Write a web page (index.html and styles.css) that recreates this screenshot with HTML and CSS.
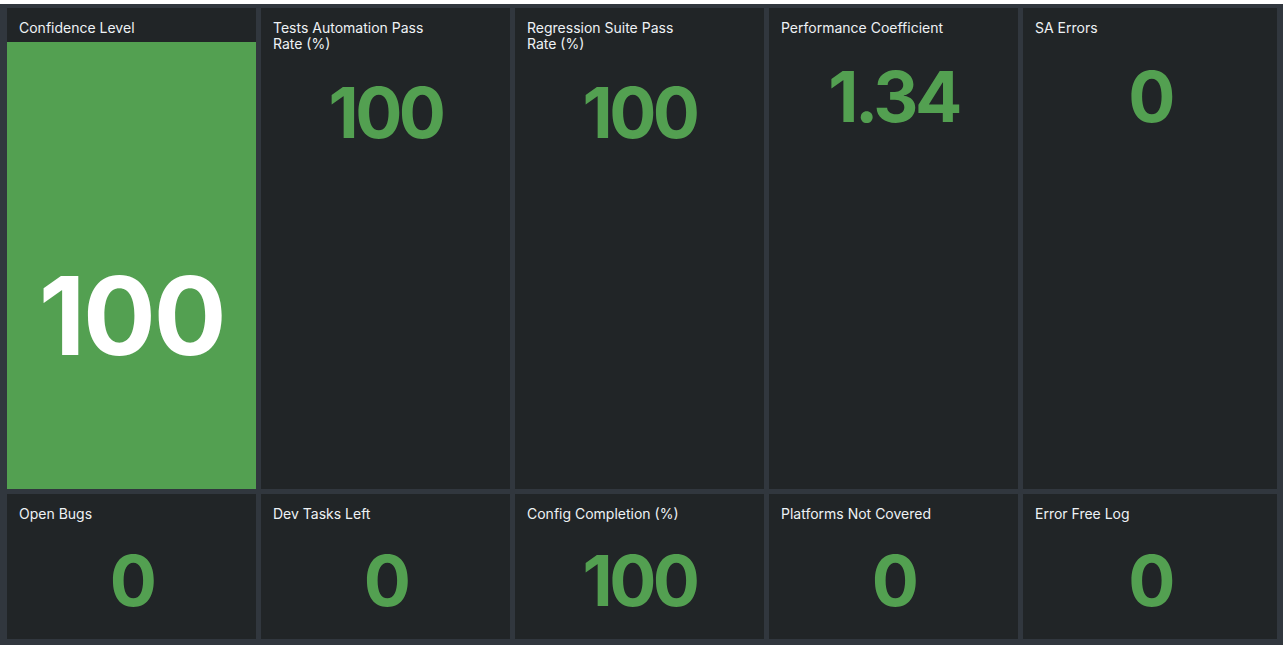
FILE: index.html
```html
<!DOCTYPE html>
<html>
<head>
<meta charset="utf-8">
<link rel="stylesheet" href="styles.css">
</head>
<body>
<div class="dashboard">
  <section class="panel panel-tall panel-confidence">
    <div class="title">Confidence Level</div>
    <div class="confidence-body"><div class="value value-xl">100</div></div>
  </section>
  <section class="panel panel-tall">
    <div class="title">Tests Automation Pass Rate (%)</div>
    <div class="value">100</div>
  </section>
  <section class="panel panel-tall">
    <div class="title">Regression Suite Pass Rate (%)</div>
    <div class="value">100</div>
  </section>
  <section class="panel panel-tall">
    <div class="title">Performance Coefficient</div>
    <div class="value">1.34</div>
  </section>
  <section class="panel panel-tall">
    <div class="title">SA Errors</div>
    <div class="value">0</div>
  </section>

  <section class="panel panel-short">
    <div class="title">Open Bugs</div>
    <div class="value">0</div>
  </section>
  <section class="panel panel-short">
    <div class="title">Dev Tasks Left</div>
    <div class="value">0</div>
  </section>
  <section class="panel panel-short">
    <div class="title">Config Completion (%)</div>
    <div class="value">100</div>
  </section>
  <section class="panel panel-short">
    <div class="title">Platforms Not Covered</div>
    <div class="value">0</div>
  </section>
  <section class="panel panel-short">
    <div class="title">Error Free Log</div>
    <div class="value">0</div>
  </section>
</div>
</body>
</html>
```
FILE: styles.css
```css
html, body {
  margin: 0;
  padding: 0;
  background: #ffffff;
}

body {
  padding-top: 4px;
  font-family: "Inter", "Open Sans", sans-serif;
}

.dashboard {
  width: 1283px;
  height: 641px;
  box-sizing: border-box;
  padding: 4px 6px 6px 7px;
  background: #31373e;
  display: grid;
  grid-template-columns: 249px 249px 249px 249px 1fr;
  grid-template-rows: 481px 145px;
  column-gap: 5px;
  row-gap: 5px;
}

.panel {
  background: #212527;
  display: flex;
  flex-direction: column;
  align-items: stretch;
  min-width: 0;
}

.title {
  color: #eef2f5;
  font-size: 14px;
  line-height: 16px;
  padding: 12px 12px 0 12px;
  max-width: 172px;
}

.value {
  color: #53a051;
  font-weight: 700;
  font-size: 70px;
  line-height: 1;
  letter-spacing: -0.05em;
  text-align: center;
  margin-top: 26px;
}

.panel-short .value {
  margin-top: 24px;
}

.panel-confidence .title {
  height: 22px;
}

.confidence-body {
  flex: 1;
  background: #53a051;
  display: flex;
  flex-direction: column;
  justify-content: center;
  padding-top: 100px;
  box-sizing: border-box;
}

.value-xl {
  color: #ffffff;
  font-size: 108px;
  letter-spacing: -0.02em;
  margin-top: 0;
}
```
